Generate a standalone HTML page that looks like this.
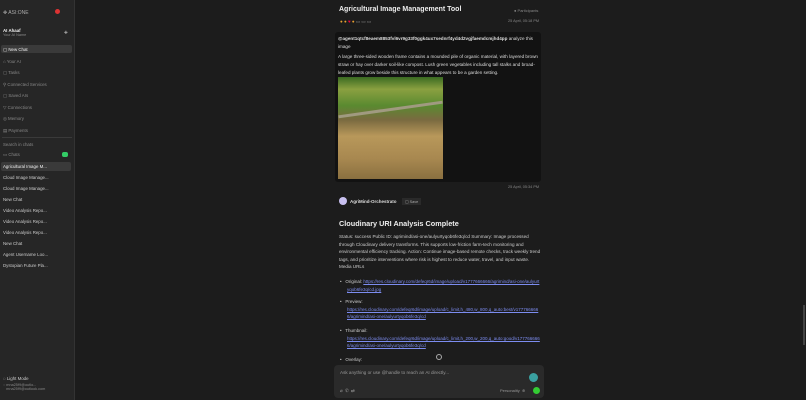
<!DOCTYPE html><html><head><style>
*{margin:0;padding:0;box-sizing:border-box}
body{width:806px;height:400px;background:#1c1c1c;font-family:"Liberation Sans",sans-serif;color:#ddd;overflow:hidden;position:relative;font-size:4.5px}
.sb{position:absolute;left:0;top:0;width:75px;height:400px;background:#262626;border-right:1px solid #333}
.sb div{position:absolute;left:3px;white-space:nowrap;font-size:4.4px;color:#ccc}
.it{color:#888!important}
.ab{position:absolute}
a{color:#7c8cf0;text-decoration:underline;word-break:break-all}
</style></head><body>
<div class="sb">
<div style="top:10px;color:#aaa;font-size:5px">✥ ASI:ONE</div>
<div style="top:9px;left:55px;width:5px;height:5px;border-radius:50%;background:#d33"></div>
<div style="top:28px;font-weight:bold;color:#eee">AI Ahaaf</div>
<div style="top:33px;color:#888;font-size:3.8px">Your AI Name</div>
<div style="top:30px;left:64px;color:#aaa">✚</div>
<div style="top:45px;left:1px;width:71px;height:8px;background:#3a3a3a;border-radius:2px"></div>
<div style="top:47px;color:#eee">▢ New Chat</div>
<div class="it" style="top:59px">⌂ Your AI</div>
<div class="it" style="top:70px">▢ Tasks</div>
<div class="it" style="top:82px">⚲ Connected Services</div>
<div class="it" style="top:93px">▢ Saved AIs</div>
<div class="it" style="top:105px">▽ Connections</div>
<div class="it" style="top:116px">◎ Memory</div>
<div class="it" style="top:128px">▤ Payments</div>
<div style="top:137px;left:2px;width:70px;height:1px;background:#3a3a3a"></div>
<div class="it" style="top:142px">Search in chats</div>
<div class="it" style="top:152px">▭ Chats</div>
<div style="top:152px;left:62px;width:6px;height:5px;background:#3c6;border-radius:2px"></div>
<div style="top:162px;left:1px;width:70px;height:9px;background:#3a3a3a;border-radius:2px"></div>
<div style="top:164px;color:#eee">Agricultural Image M...</div>
<div style="top:175px">Cloud Image Manage...</div>
<div style="top:186px">Cloud Image Manage...</div>
<div style="top:197px">New Chat</div>
<div style="top:208px">Video Analysis Repo...</div>
<div style="top:219px">Video Analysis Repo...</div>
<div style="top:230px">Video Analysis Repo...</div>
<div style="top:241px">New Chat</div>
<div style="top:252px">Agent Username Loo...</div>
<div style="top:263px">Dystopian Future Pla...</div>
<div style="top:376px">◌ Light Mode</div>
<div class="it" style="top:383px;font-size:3.8px">◌ mna25f9@outlo...<br>&nbsp;&nbsp;&nbsp;mna25f9@outlook.com</div>
</div>
<div class="ab" style="left:339px;top:6px;font-size:7px;font-weight:bold;color:#eee">Agricultural Image Management Tool</div>
<div class="ab" style="left:514px;top:8px;font-size:4px;color:#888">● Participants</div>
<div class="ab" style="left:340px;top:19px;font-size:4.5px;color:#e8a030">● ● <span style="color:#e04">♥</span> ● <span style="color:#888">▭ ▭ ▭</span></div>
<div class="ab" style="left:508px;top:19px;font-size:3.8px;color:#888">25 April, 05:18 PM</div>
<div class="ab" style="left:335px;top:32px;width:206px;height:150px;background:#121212;border-radius:3px"></div>
<div class="ab" style="left:338px;top:35px;width:201px;font-size:4.6px;line-height:8px;color:#ddd"><b>@agent1qtcf8eaem8853fvl6vr9g33f0ggk4ux7sednrf4yd4d2vgjfaemdcmjhd4pp</b> analyze this image<div style="margin-top:2px">A large three-sided wooden frame contains a mounded pile of organic material, with layered brown straw or hay over darker soil-like compost. Lush green vegetables including tall stalks and broad-leafed plants grow beside this structure in what appears to be a garden setting.</div></div>
<div class="ab" style="left:338px;top:77px;width:105px;height:102px;background:linear-gradient(180deg,#3a6a22 0%,#8aa040 12%,#5a8a30 28%,#7a6a40 42%,#b8985a 58%,#a88850 80%,#8a7040 100%)"></div>
<div class="ab" style="left:338px;top:108px;width:105px;height:3px;background:#a09a80;transform:rotate(-8deg)"></div>
<div class="ab" style="left:508px;top:185px;font-size:3.8px;color:#888">25 April, 05:34 PM</div>
<div class="ab" style="left:339px;top:197px;width:8px;height:8px;border-radius:50%;background:#c8c0f0"></div>
<div class="ab" style="left:350px;top:199px;font-size:4.5px;font-weight:bold;color:#ddd">AgriMind-Orchestrato</div>
<div class="ab" style="left:402px;top:198px;padding:1px 3px;background:#2a2a2a;font-size:3.8px;color:#aaa">▢ Save</div>
<div class="ab" style="left:339px;top:219px;font-size:7.3px;font-weight:bold;color:#eee">Cloudinary URI Analysis Complete</div>
<div class="ab" style="left:339px;top:233px;width:203px;font-size:4.6px;line-height:7.6px;color:#ccc">Status: success Public ID: agrimind/asi-one/aulyurtyqob6fe3q/cd Summary: Image processed through Cloudinary delivery transforms. This supports low-friction farm-tech monitoring and environmental efficiency tracking. Action: Continue image-based remote checks, track weekly trend tags, and prioritize interventions where risk is highest to reduce water, travel, and input waste. Media URLs</div>
<div class="ab" style="left:340px;top:278px;width:200px;font-size:4.5px;line-height:7.6px;color:#ccc">
<div style="padding-left:7px;text-indent:-7px">•&nbsp;&nbsp; Original: <a>https://res.cloudinary.com/defeqr6d/image/upload/v1777666666/agrimind/asi-one/aulyurtyqob6fe3q/cd.jpg</a></div>
<div style="margin-top:5px;padding-left:7px;text-indent:-7px">•&nbsp;&nbsp; Preview:<br><a>https://res.cloudinary.com/defeqr6d/image/upload/c_limit,h_480,w_800,q_auto:best/v1777666666/agrimind/asi-one/aulyurtyqob6fe3q/cd</a></div>
<div style="margin-top:6px;padding-left:7px;text-indent:-7px">•&nbsp;&nbsp; Thumbnail:<br><a>https://res.cloudinary.com/defeqr6d/image/upload/c_limit,h_200,w_200,q_auto:good/v1777666666/agrimind/asi-one/aulyurtyqob6fe3q/cd</a></div>
<div style="margin-top:6px">•&nbsp;&nbsp; Overlay:</div></div>
<div class="ab" style="left:436px;top:354px;width:6px;height:6px;border-radius:50%;border:1px solid #aaa;background:#222"></div>
<div class="ab" style="left:334px;top:365px;width:210px;height:33px;background:#2a2a2a;border-radius:4px"></div>
<div class="ab" style="left:340px;top:370px;font-size:4.6px;color:#999">Ask anything or use @handle to reach an AI directly...</div>
<div class="ab" style="left:529px;top:373px;width:9px;height:9px;border-radius:50%;background:#3aa0a0"></div>
<div class="ab" style="left:340px;top:388px;font-size:4.3px;color:#999">⌀ &nbsp;✆ &nbsp;⇄</div>
<div class="ab" style="left:500px;top:388px;font-size:4px;color:#999">Personality &nbsp;⊕</div>
<div class="ab" style="left:533px;top:387px;width:7px;height:7px;border-radius:50%;background:#3c3"></div>
<div class="ab" style="left:803px;top:305px;width:2px;height:40px;background:#444"></div>
</body></html>
